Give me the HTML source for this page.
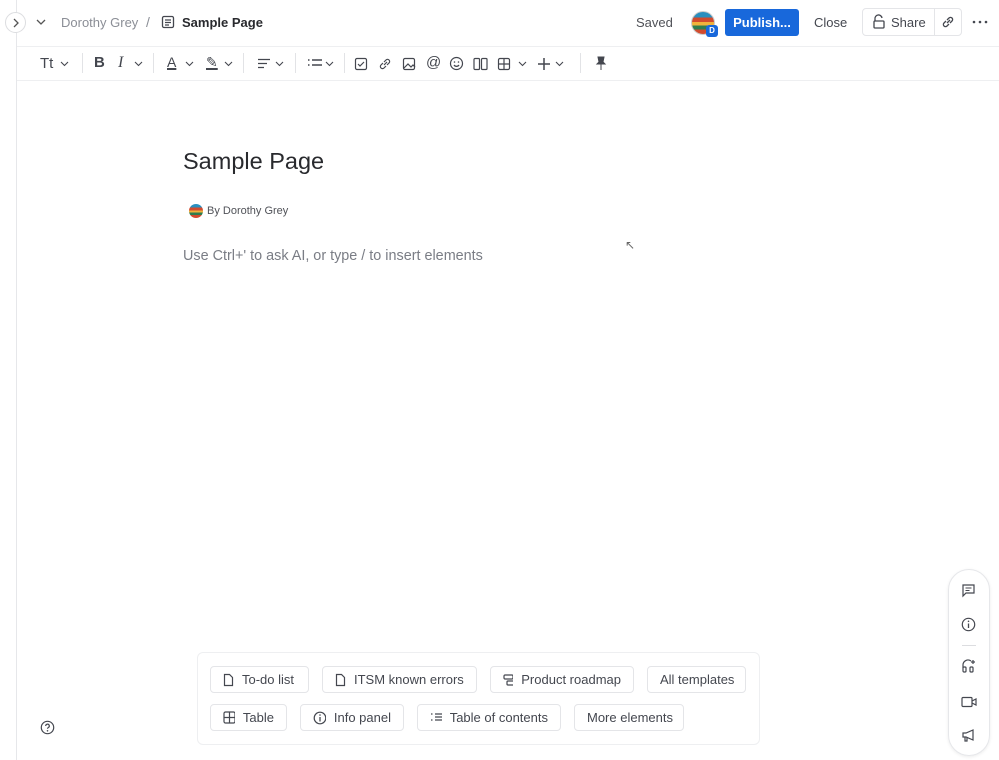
<!DOCTYPE html>
<html><head><meta charset="utf-8"><style>
*{box-sizing:border-box;margin:0;padding:0}
body{width:999px;height:760px;background:#fff;font-family:"Liberation Sans",sans-serif;color:#292a2e;position:relative;overflow:hidden;font-size:13px}
.a{position:absolute}
.ic{position:absolute;display:block}
.btn{position:absolute;height:27px;border:1px solid #e4e5e8;border-radius:4px;font-size:13px;color:#44474f;display:flex;align-items:center;padding:0 12px;gap:8px;white-space:nowrap}
.sep{position:absolute;width:1px;height:20px;background:#e2e3e6;top:53px}
.tb{position:absolute;top:54px;font-size:14px;color:#44474f}
.cv{position:absolute;top:61px}
</style></head><body>
<div class="a" style="left:16px;top:0;width:1px;height:760px;background:#e6e7ea"></div>
<div class="a" style="left:5px;top:12px;width:21px;height:21px;border:1px solid #dcdde0;border-radius:50%;background:#fff"></div>
<svg class="ic" style="left:11px;top:18px" width="10" height="10"><path d="M3 1l4 4-4 4" fill="none" stroke="#555" stroke-width="1.3"/></svg>
<svg class="ic" style="left:36px;top:18px" width="10" height="8"><path d="M1 2l4 4 4-4" fill="none" stroke="#555" stroke-width="1.3"/></svg>
<div class="a" style="left:61px;top:15px;font-size:13px;color:#8b8e96">Dorothy Grey</div>
<div class="a" style="left:146px;top:14px;font-size:14px;color:#8b8e96">/</div>
<svg class="ic" style="left:161px;top:15px" width="14" height="14"><rect x="1.5" y="1.5" width="11" height="11" rx="1.5" fill="none" stroke="#44474f" stroke-width="1.3"/><path d="M4 5h6M4 7.5h6M4 10h4" stroke="#44474f" stroke-width="1.2"/></svg>
<div class="a" style="left:182px;top:15px;font-size:13px;font-weight:bold;color:#292a2e">Sample Page</div>
<div class="a" style="left:636px;top:15px;color:#505258">Saved</div>
<div class="a" style="left:691px;top:11px;width:24px;height:24px;border-radius:50%;background:linear-gradient(#2a8fbf 0 25%,#d24b2e 25% 45%,#f0b23b 45% 62%,#2f7d4f 62% 80%,#d24b2e 80%);border:1px solid #ccc"></div>
<div class="a" style="left:706px;top:25px;width:12px;height:12px;border-radius:3px;background:#1868db;color:#fff;font-size:8px;font-weight:bold;text-align:center;line-height:12px">D</div>
<div class="a" style="left:725px;top:9px;width:74px;height:27px;background:#1868db;border-radius:3px;color:#fff;font-weight:bold;font-size:13px;text-align:center;line-height:27px">Publish...</div>
<div class="a" style="left:814px;top:15px;color:#44474f">Close</div>
<div class="a" style="left:862px;top:8px;width:100px;height:28px;border:1px solid #e4e5e8;border-radius:4px"></div>
<div class="a" style="left:934px;top:8px;width:1px;height:28px;background:#e4e5e8"></div>
<svg class="ic" style="left:872px;top:14px" width="14" height="16"><path d="M3 7V5a3.5 3.5 0 0 1 7-1" fill="none" stroke="#44474f" stroke-width="1.3"/><rect x="2" y="7" width="10" height="7" rx="1" fill="none" stroke="#44474f" stroke-width="1.3"/></svg>
<div class="a" style="left:891px;top:15px;color:#44474f">Share</div>
<svg class="ic" style="left:941px;top:15px" width="14" height="14"><path d="M6 8l3-3M5 6L3 8a2 2 0 0 0 3 3l2-2M9 8l2-2a2 2 0 0 0-3-3L6 5" fill="none" stroke="#44474f" stroke-width="1.3"/></svg>
<svg class="ic" style="left:972px;top:20px" width="16" height="4"><circle cx="2" cy="2" r="1.3" fill="#44474f"/><circle cx="8" cy="2" r="1.3" fill="#44474f"/><circle cx="14" cy="2" r="1.3" fill="#44474f"/></svg>
<div class="a" style="left:17px;top:46px;width:982px;height:1px;background:#eeeff1"></div>
<div class="a" style="left:17px;top:80px;width:982px;height:1px;background:#eeeff1"></div>
<div class="tb" style="left:40px;top:55px;font-size:15px">Tt</div>
<svg class="cv" style="left:60px" width="9" height="6"><path d="M1 1l3.5 3.5L8 1" fill="none" stroke="#44474f" stroke-width="1.1"/></svg>
<div class="sep" style="left:82px"></div>
<div class="tb" style="left:94px;font-weight:bold;font-size:15px">B</div>
<div class="tb" style="left:118px;font-style:italic;font-size:16px;font-family:'Liberation Serif'">I</div>
<svg class="cv" style="left:134px" width="9" height="6"><path d="M1 1l3.5 3.5L8 1" fill="none" stroke="#44474f" stroke-width="1.1"/></svg>
<div class="sep" style="left:153px"></div>
<div class="tb" style="left:167px;text-decoration:underline;text-decoration-thickness:2px">A</div>
<svg class="cv" style="left:185px" width="9" height="6"><path d="M1 1l3.5 3.5L8 1" fill="none" stroke="#44474f" stroke-width="1.1"/></svg>
<div class="tb" style="left:206px;text-decoration:underline;text-decoration-thickness:2px">✎</div>
<svg class="cv" style="left:224px" width="9" height="6"><path d="M1 1l3.5 3.5L8 1" fill="none" stroke="#44474f" stroke-width="1.1"/></svg>
<div class="sep" style="left:243px"></div>
<svg class="ic" style="left:257px;top:58px" width="14" height="12"><path d="M1 1.5h12M1 5.5h9M1 9.5h6" stroke="#44474f" stroke-width="1.3"/></svg>
<svg class="cv" style="left:275px" width="9" height="6"><path d="M1 1l3.5 3.5L8 1" fill="none" stroke="#44474f" stroke-width="1.1"/></svg>
<div class="sep" style="left:295px"></div>
<svg class="ic" style="left:307px;top:58px" width="16" height="12"><path d="M1 2h1.5M1 7h1.5M5 2h10M5 7h10" stroke="#44474f" stroke-width="1.5"/></svg>
<svg class="cv" style="left:325px" width="9" height="6"><path d="M1 1l3.5 3.5L8 1" fill="none" stroke="#44474f" stroke-width="1.1"/></svg>
<div class="sep" style="left:344px"></div>
<svg class="ic" style="left:354px;top:57px" width="14" height="14"><rect x="1.5" y="1.5" width="11" height="11" rx="1.5" fill="none" stroke="#44474f" stroke-width="1.2"/><path d="M4 7l2 2 4-4" fill="none" stroke="#44474f" stroke-width="1.2"/></svg>
<svg class="ic" style="left:378px;top:57px" width="14" height="14"><path d="M6 8l3-3M5 6L3 8a2 2 0 0 0 3 3l2-2M9 8l2-2a2 2 0 0 0-3-3L6 5" fill="none" stroke="#44474f" stroke-width="1.2"/></svg>
<svg class="ic" style="left:402px;top:57px" width="14" height="14"><rect x="1.5" y="1.5" width="11" height="11" rx="1.5" fill="none" stroke="#44474f" stroke-width="1.2"/><path d="M2 11l4-4 3 3 2-2 2 2" fill="none" stroke="#44474f" stroke-width="1.2"/></svg>
<div class="tb" style="left:426px;top:54px;font-size:15px">@</div>
<svg class="ic" style="left:449px;top:56px" width="15" height="15"><circle cx="7.5" cy="7.5" r="6" fill="none" stroke="#44474f" stroke-width="1.2"/><path d="M5 9a3 3 0 0 0 5 0" fill="none" stroke="#44474f" stroke-width="1.2"/><circle cx="5.5" cy="6" r=".8" fill="#44474f"/><circle cx="9.5" cy="6" r=".8" fill="#44474f"/></svg>
<svg class="ic" style="left:473px;top:57px" width="15" height="14"><rect x="1" y="1.5" width="5.5" height="11" rx="1" fill="none" stroke="#44474f" stroke-width="1.2"/><rect x="8.5" y="1.5" width="5.5" height="11" rx="1" fill="none" stroke="#44474f" stroke-width="1.2"/></svg>
<svg class="ic" style="left:497px;top:57px" width="14" height="14"><rect x="1.5" y="1.5" width="11" height="11" rx="1.5" fill="none" stroke="#44474f" stroke-width="1.2"/><path d="M7 1.5v11M1.5 7h11" stroke="#44474f" stroke-width="1.2"/></svg>
<svg class="cv" style="left:518px" width="9" height="6"><path d="M1 1l3.5 3.5L8 1" fill="none" stroke="#44474f" stroke-width="1.1"/></svg>
<svg class="ic" style="left:537px;top:57px" width="14" height="14"><path d="M7 1v12M1 7h12" stroke="#44474f" stroke-width="1.5"/></svg>
<svg class="cv" style="left:555px" width="9" height="6"><path d="M1 1l3.5 3.5L8 1" fill="none" stroke="#44474f" stroke-width="1.1"/></svg>
<div class="sep" style="left:580px"></div>
<svg class="ic" style="left:595px;top:56px" width="12" height="15"><path d="M3 1h6l-1 5 2 2H2l2-2zM6 8v6" fill="#44474f" stroke="#44474f" stroke-width="1"/></svg>
<div class="a" style="left:183px;top:148px;font-size:23.5px;color:#292a2e">Sample Page</div>
<div class="a" style="left:189px;top:204px;width:14px;height:14px;border-radius:50%;background:linear-gradient(#2a8fbf 0 25%,#d24b2e 25% 45%,#f0b23b 45% 62%,#2f7d4f 62% 80%,#d24b2e 80%)"></div>
<div class="a" style="left:207px;top:205px;font-size:11px;color:#505258">By Dorothy Grey</div>
<div class="a" style="left:183px;top:248px;font-size:14.4px;color:#7a7d85">Use Ctrl+' to ask AI, or type / to insert elements</div>
<div class="a" style="left:625px;top:238px;font-size:12px;color:#666">↖</div>
<div class="a" style="left:197px;top:652px;width:563px;height:93px;border:1px solid #eeeff1;border-radius:6px"></div>
<div class="btn" style="left:210px;top:666px;width:99px"><svg width="11" height="14"><path d="M1.5 1.5h5l3 3v8h-8z" fill="none" stroke="#44474f" stroke-width="1.2"/></svg>To-do list</div>
<div class="btn" style="left:322px;top:666px;width:155px"><svg width="11" height="14"><path d="M1.5 1.5h5l3 3v8h-8z" fill="none" stroke="#44474f" stroke-width="1.2"/></svg>ITSM known errors</div>
<div class="btn" style="left:490px;top:666px;width:144px"><svg width="14" height="12"><rect x="1" y="1" width="9" height="4" rx="1" fill="none" stroke="#44474f" stroke-width="1.2"/><rect x="4" y="7" width="9" height="4" rx="1" fill="none" stroke="#44474f" stroke-width="1.2"/></svg>Product roadmap</div>
<div class="btn" style="left:647px;top:666px;width:99px">All templates</div>
<div class="btn" style="left:210px;top:704px;width:77px"><svg width="13" height="13"><rect x="1" y="1" width="11" height="11" rx="1.5" fill="none" stroke="#44474f" stroke-width="1.2"/><path d="M6.5 1v11M1 6.5h11" stroke="#44474f" stroke-width="1.2"/></svg>Table</div>
<div class="btn" style="left:300px;top:704px;width:104px"><svg width="14" height="14"><circle cx="7" cy="7" r="5.8" fill="none" stroke="#44474f" stroke-width="1.2"/><path d="M7 6v4.5" stroke="#44474f" stroke-width="1.3"/><circle cx="7" cy="4" r=".8" fill="#44474f"/></svg>Info panel</div>
<div class="btn" style="left:417px;top:704px;width:144px"><svg width="15" height="12"><path d="M1 2h1.5M1 8h1.5M5 2h9M5 5h9M5 8h9" stroke="#44474f" stroke-width="1.3"/></svg>Table of contents</div>
<div class="btn" style="left:574px;top:704px;width:110px">More elements</div>
<svg class="ic" style="left:40px;top:720px" width="15" height="15"><circle cx="7.5" cy="7.5" r="6.2" fill="none" stroke="#44474f" stroke-width="1.2"/><path d="M5.7 6a1.8 1.8 0 1 1 2.5 1.6c-.6.3-.7.6-.7 1.2" fill="none" stroke="#44474f" stroke-width="1.2"/><circle cx="7.5" cy="10.8" r=".8" fill="#44474f"/></svg>
<div class="a" style="left:948px;top:569px;width:42px;height:187px;border:1px solid #e6e7ea;border-radius:21px;box-shadow:0 1px 3px rgba(0,0,0,.08)"></div>
<svg class="ic" style="left:961px;top:583px" width="15" height="15"><path d="M2 2h11v8H5l-3 3z" fill="none" stroke="#44474f" stroke-width="1.2"/><path d="M4.5 5h6M4.5 7.5h4" stroke="#44474f" stroke-width="1.1"/></svg>
<svg class="ic" style="left:961px;top:617px" width="15" height="15"><circle cx="7.5" cy="7.5" r="6.2" fill="none" stroke="#44474f" stroke-width="1.2"/><path d="M7.5 6.5v4.5" stroke="#44474f" stroke-width="1.3"/><circle cx="7.5" cy="4.3" r=".8" fill="#44474f"/></svg>
<div class="a" style="left:962px;top:645px;width:14px;height:1px;background:#dcdde0"></div>
<svg class="ic" style="left:961px;top:658px" width="15" height="16"><path d="M2 10V7a5 5 0 0 1 8-4" fill="none" stroke="#44474f" stroke-width="1.2"/><rect x="2" y="9" width="3" height="5" rx="1" fill="none" stroke="#44474f" stroke-width="1.2"/><rect x="9" y="9" width="3" height="5" rx="1" fill="none" stroke="#44474f" stroke-width="1.2"/><path d="M12 2v4M10 4h4" stroke="#44474f" stroke-width="1.2"/></svg>
<svg class="ic" style="left:961px;top:695px" width="16" height="14"><rect x="1" y="2.5" width="10" height="9" rx="1" fill="none" stroke="#44474f" stroke-width="1.2"/><path d="M11 6l4-2v6l-4-2" fill="none" stroke="#44474f" stroke-width="1.2"/></svg>
<svg class="ic" style="left:961px;top:728px" width="15" height="15"><path d="M2 5h3l7-3v10L5 9H2z" fill="none" stroke="#44474f" stroke-width="1.2"/><path d="M4 9v4h2V9.5" fill="none" stroke="#44474f" stroke-width="1.2"/></svg>
</body></html>
